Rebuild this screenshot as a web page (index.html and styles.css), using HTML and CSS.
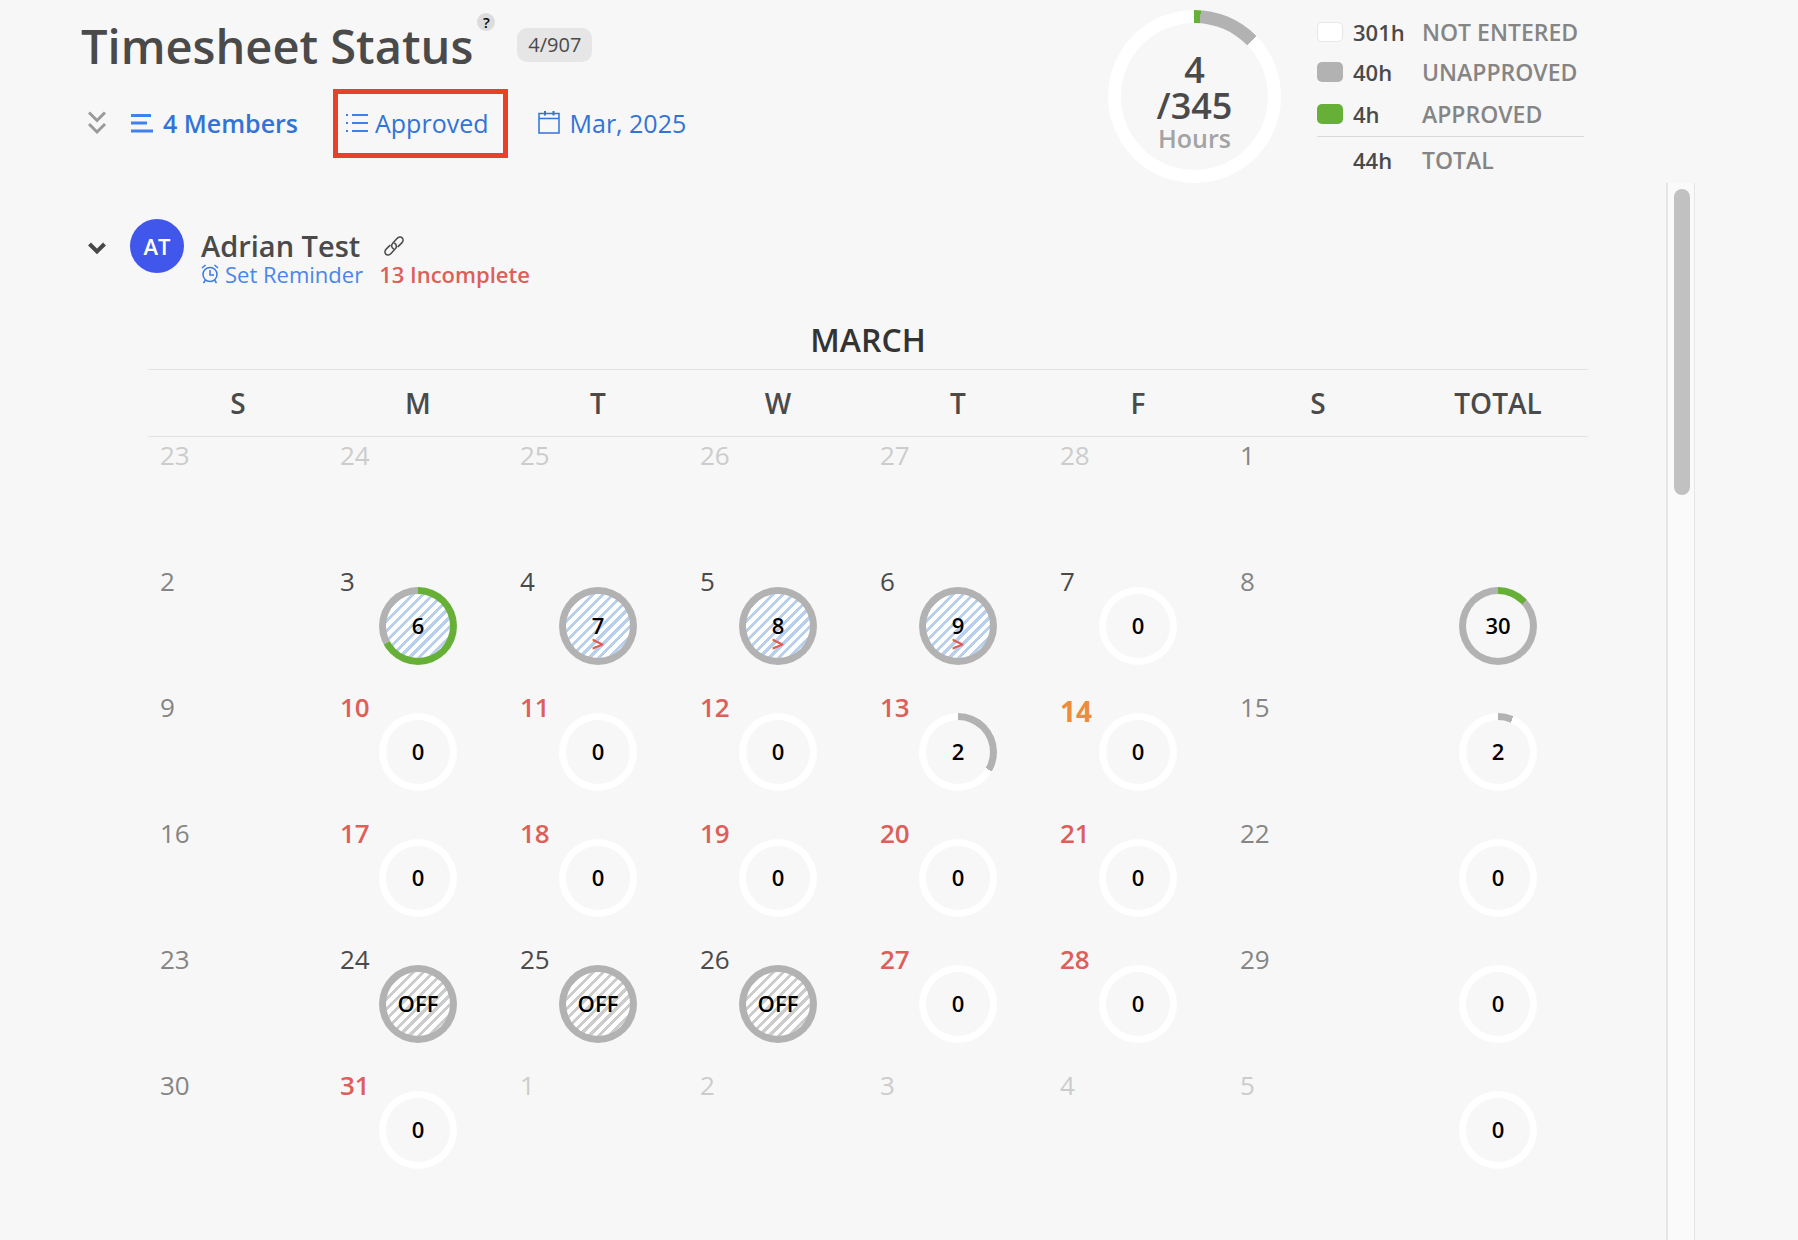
FILE: index.html
```html
<!DOCTYPE html>
<html lang="en">
<head>
<meta charset="utf-8">
<meta name="viewport" content="width=device-width, initial-scale=1">
<title>Timesheet Status</title>
<link rel="stylesheet" href="styles.css">
</head>
<body>
<header class="header">
  <div class="heading">
    <div class="title-row">
      <h1 class="title">Timesheet Status</h1>
      <button class="help" type="button" aria-label="Help">?</button>
      <span class="badge">4/907</span>
    </div>
    <div class="filters">
      <button class="expand" type="button" aria-label="Expand all">
        <svg width="18" height="24" viewBox="0 0 18 24" fill="none" stroke="#999" stroke-width="3"><path d="M1 1.5l8 8 8-8M1 13l8 8 8-8"/></svg>
      </button>
      <button class="filter members" type="button">
        <svg width="22" height="20" viewBox="0 0 22 20" fill="none" stroke="#4080f0" stroke-width="3"><path d="M0 2.500h20M0 10h16M0 18h22"/></svg>
        4 Members
      </button>
      <button class="filter highlighted" type="button">
        <svg width="22" height="20" viewBox="0 0 22 20" fill="none" stroke="#4080e8" stroke-width="2"><path d="M0 2h2M6 2h16M0 10h2M6 10h16M0 18h2M6 18h16"/></svg>
        Approved
      </button>
      <button class="filter period" type="button">
        <svg width="22" height="24" viewBox="0 0 22 24" fill="none" stroke="#3273d6" stroke-width="1.500"><path d="M1 2.500h20v19.500H1zM1 7.500h20"/><path d="M7 0v4.500M15.500 0v4.500" stroke-width="2"/></svg>
        Mar, 2025
      </button>
    </div>
  </div>
  <div class="summary">
    <div class="ring ring-large" style="--approved:1.16%;--entered:12.75%">
      <div class="face"><strong class="hours">4<br>/345</strong><span class="unit">Hours</span></div>
    </div>
    <table class="legend">
      <tbody>
        <tr><td><span class="swatch empty"></span></td><td class="amount">301h</td><th scope="row">NOT ENTERED</th></tr>
        <tr><td><span class="swatch entered"></span></td><td class="amount">40h</td><th scope="row">UNAPPROVED</th></tr>
        <tr><td><span class="swatch approved"></span></td><td class="amount">4h</td><th scope="row">APPROVED</th></tr>
      </tbody>
      <tfoot>
        <tr><td></td><td class="amount">44h</td><th scope="row">TOTAL</th></tr>
      </tfoot>
    </table>
  </div>
</header>
<div class="content">
  <main class="main">
    <section class="member">
      <button class="toggle" type="button" aria-label="Collapse member">
        <svg width="18" height="13" viewBox="0 0 18 13" fill="none" stroke="#484848" stroke-width="4"><path d="M1.500 2l7.500 7.500L16.500 2"/></svg>
      </button>
      <span class="avatar">AT</span>
      <div class="identity">
        <div class="name-row">
          <h2 class="name">Adrian Test</h2>
          <a class="link" href="#adrian" aria-label="Link to member">
            <svg width="20" height="20" viewBox="0 0 20 20" fill="none" stroke="#4a4a4a" stroke-width="1.500" stroke-linecap="round"><path d="M9.500 12.800C7.300 11.500 7 9 8.700 7.200L13 2.600c1.700-1.800 3.900-2 5.200-.7s1.200 3.500-.6 5.200L14 10.600"/><path d="M10.500 7.200c2.200 1.300 2.500 3.800.8 5.600L7 17.400c-1.700 1.800-3.900 2-5.200.7s-1.200-3.500.6-5.200L6 9.400"/></svg>
          </a>
        </div>
        <div class="status-row">
          <button class="reminder" type="button">
            <svg width="18" height="20" viewBox="0 0 18 20" fill="none" stroke="#3b7be0" stroke-width="1.500"><circle cx="9" cy="10.500" r="7"/><path d="M9 6v5h4M1 4l3.500-3M17 4l-3.500-3M4.500 16L2.500 19M13.500 16l2 3"/></svg>
            Set Reminder
          </button>
          <span class="incomplete">13 Incomplete</span>
        </div>
      </div>
    </section>
    <table class="calendar">
      <caption>MARCH</caption>
      <thead>
        <tr><th scope="col">S</th><th scope="col">M</th><th scope="col">T</th><th scope="col">W</th><th scope="col">T</th><th scope="col">F</th><th scope="col">S</th><th scope="col">TOTAL</th></tr>
      </thead>
      <tbody>
        <tr>
          <td><div class="day"><span class="date outside">23</span></div></td>
          <td><div class="day"><span class="date outside">24</span></div></td>
          <td><div class="day"><span class="date outside">25</span></div></td>
          <td><div class="day"><span class="date outside">26</span></div></td>
          <td><div class="day"><span class="date outside">27</span></div></td>
          <td><div class="day"><span class="date outside">28</span></div></td>
          <td><div class="day"><span class="date weekend">1</span></div></td>
          <td></td>
        </tr>
        <tr>
          <td><div class="day"><span class="date weekend">2</span></div></td>
          <td><div class="day"><span class="date">3</span><div class="ring" style="--approved:67%;--entered:100%"><div class="face logged">6</div></div></div></td>
          <td><div class="day"><span class="date">4</span><div class="ring" style="--entered:100%"><div class="face logged">7<span class="over">&gt;</span></div></div></div></td>
          <td><div class="day"><span class="date">5</span><div class="ring" style="--entered:100%"><div class="face logged">8<span class="over">&gt;</span></div></div></div></td>
          <td><div class="day"><span class="date">6</span><div class="ring" style="--entered:100%"><div class="face logged">9<span class="over">&gt;</span></div></div></div></td>
          <td><div class="day"><span class="date">7</span><div class="ring"><div class="face">0</div></div></div></td>
          <td><div class="day"><span class="date weekend">8</span></div></td>
          <td><div class="day"><div class="ring" style="--approved:13.300%;--entered:100%"><div class="face">30</div></div></div></td>
        </tr>
        <tr>
          <td><div class="day"><span class="date weekend">9</span></div></td>
          <td><div class="day"><span class="date missing">10</span><div class="ring"><div class="face">0</div></div></div></td>
          <td><div class="day"><span class="date missing">11</span><div class="ring"><div class="face">0</div></div></div></td>
          <td><div class="day"><span class="date missing">12</span><div class="ring"><div class="face">0</div></div></div></td>
          <td><div class="day"><span class="date missing">13</span><div class="ring" style="--entered:33.300%"><div class="face">2</div></div></div></td>
          <td><div class="day"><span class="date today">14</span><div class="ring"><div class="face">0</div></div></div></td>
          <td><div class="day"><span class="date weekend">15</span></div></td>
          <td><div class="day"><div class="ring" style="--entered:6.500%"><div class="face">2</div></div></div></td>
        </tr>
        <tr>
          <td><div class="day"><span class="date weekend">16</span></div></td>
          <td><div class="day"><span class="date missing">17</span><div class="ring"><div class="face">0</div></div></div></td>
          <td><div class="day"><span class="date missing">18</span><div class="ring"><div class="face">0</div></div></div></td>
          <td><div class="day"><span class="date missing">19</span><div class="ring"><div class="face">0</div></div></div></td>
          <td><div class="day"><span class="date missing">20</span><div class="ring"><div class="face">0</div></div></div></td>
          <td><div class="day"><span class="date missing">21</span><div class="ring"><div class="face">0</div></div></div></td>
          <td><div class="day"><span class="date weekend">22</span></div></td>
          <td><div class="day"><div class="ring"><div class="face">0</div></div></div></td>
        </tr>
        <tr>
          <td><div class="day"><span class="date weekend">23</span></div></td>
          <td><div class="day"><span class="date">24</span><div class="ring" style="--entered:100%"><div class="face off">OFF</div></div></div></td>
          <td><div class="day"><span class="date">25</span><div class="ring" style="--entered:100%"><div class="face off">OFF</div></div></div></td>
          <td><div class="day"><span class="date">26</span><div class="ring" style="--entered:100%"><div class="face off">OFF</div></div></div></td>
          <td><div class="day"><span class="date missing">27</span><div class="ring"><div class="face">0</div></div></div></td>
          <td><div class="day"><span class="date missing">28</span><div class="ring"><div class="face">0</div></div></div></td>
          <td><div class="day"><span class="date weekend">29</span></div></td>
          <td><div class="day"><div class="ring"><div class="face">0</div></div></div></td>
        </tr>
        <tr>
          <td><div class="day"><span class="date weekend">30</span></div></td>
          <td><div class="day"><span class="date missing">31</span><div class="ring"><div class="face">0</div></div></div></td>
          <td><div class="day"><span class="date outside">1</span></div></td>
          <td><div class="day"><span class="date outside">2</span></div></td>
          <td><div class="day"><span class="date outside">3</span></div></td>
          <td><div class="day"><span class="date outside">4</span></div></td>
          <td><div class="day"><span class="date outside">5</span></div></td>
          <td><div class="day"><div class="ring"><div class="face">0</div></div></div></td>
        </tr>
      </tbody>
    </table>
  </main>
  <div class="track"><div class="thumb"></div></div>
</div>
</body>
</html>
```
FILE: styles.css
```css
* { box-sizing: border-box; }

:root {
  --page: #f7f7f7;
  --text: #4a4a4a;
  --blue: #3273d6;
  --red: #dd5f5a;
  --gray: #b2b2b2;
  --green: #67b037;
}

body {
  margin: 0;
  min-height: 100vh;
  display: flex;
  flex-direction: column;
  background: var(--page);
  color: var(--text);
  font-family: "Open Sans", "Noto Sans", sans-serif;
  font-size: 26px;
}

h1, h2 { margin: 0; font-weight: 600; }

button {
  display: flex;
  align-items: center;
  margin: 0;
  padding: 0;
  border: 0;
  background: none;
  color: inherit;
  font: inherit;
  cursor: pointer;
}

svg { display: block; flex: none; }

/* Header */
.header {
  display: flex;
  justify-content: space-between;
  height: 183px;
  padding: 10px 214px 0 81px;
}

.title-row { display: flex; align-items: flex-start; height: 79px; }
.title { font-size: 47px; line-height: 72px; }

.help {
  justify-content: center;
  width: 18px;
  height: 18px;
  margin: 3px 0 0 4px;
  border-radius: 50%;
  background: #dcdcdc;
  color: #000;
  font-size: 15px;
  font-weight: 600;
  line-height: 18px;
}

.badge {
  margin: 18px 0 0 22px;
  padding: 0 11px;
  border-radius: 10px;
  background: #e6e6e6;
  font-size: 20px;
  line-height: 34px;
}

.filters { display: flex; align-items: center; color: var(--blue); font-size: 25px; }
.filter { height: 69px; padding-bottom: 2px; line-height: 34px; }
.expand { margin: 0 25px 0 7px; padding-bottom: 2px; }
.members { gap: 10px; margin-right: 35px; font-weight: 600; }
.highlighted { gap: 7px; padding: 0 14px 2px 8px; border: 5px solid #ea4025; }
.period { gap: 10px; margin-left: 30px; }

.summary { display: flex; align-items: flex-start; gap: 36px; }

/* Progress rings */
.ring {
  width: 78px;
  height: 78px;
  padding: 7px;
  border-radius: 50%;
  background: conic-gradient(
    var(--green) 0 var(--approved, 0%),
    var(--gray) 0 var(--entered, 0%),
    #fff 0
  );
}

.face {
  position: relative;
  display: grid;
  place-items: center;
  height: 100%;
  padding-bottom: 2px;
  border-radius: 50%;
  background: var(--page);
  color: #000;
  font-size: 22px;
  font-weight: 600;
  line-height: 30px;
}

.logged { background: repeating-linear-gradient(135deg, #fff 0 4px, #b9d0ec 4px 7px); }
.off { background: repeating-linear-gradient(135deg, #fff 0 4px, #ccc 4px 7px); }
.over { position: absolute; bottom: 5px; color: var(--red); font-weight: 700; line-height: 20px; }

.ring-large { width: 173px; height: 173px; padding: 13px; }
.ring-large .face { align-content: center; padding: 10px 0 0; color: var(--text); }
.hours { font-size: 36px; font-weight: 600; line-height: 36px; text-align: center; }
.unit { color: #a3a3a3; font-size: 25px; line-height: 28px; }

.legend { width: 267px; margin-top: 2px; border-collapse: collapse; line-height: 30px; }
.legend td, .legend th { height: 40px; padding: 0; text-align: left; }
.legend tbody tr:last-child > * { height: 44px; }
.legend td:first-child { width: 36px; }
.legend th { color: #858585; font-size: 23px; font-weight: 600; white-space: nowrap; }
.legend .amount { width: 69px; font-size: 22px; font-weight: 600; }
.legend tfoot tr { border-top: 1px solid #d9d9d9; }
.legend tfoot td, .legend tfoot th { height: 48px; }

.swatch { display: block; width: 26px; height: 20px; border-radius: 5px; }
.swatch.empty { border: 1px solid #e8e8e8; background: #fff; }
.swatch.entered { background: var(--gray); }
.swatch.approved { background: var(--green); }

/* Scrolling content */
.content { display: flex; flex: 1; padding-right: 103px; }
.main { flex: 1; padding: 36px 78px 0 88px; }

.member { display: flex; align-items: flex-start; height: 96px; }
.toggle { height: 58px; margin-right: 24px; }

.avatar {
  width: 54px;
  height: 54px;
  border-radius: 50%;
  background: #4157eb;
  color: #fff;
  font-size: 22px;
  font-weight: 600;
  line-height: 54px;
  text-align: center;
}

.identity { margin: 10px 0 0 17px; }
.name-row { display: flex; align-items: center; gap: 24px; }
.name { font-size: 29px; line-height: 34px; }
.status-row { display: flex; gap: 16px; font-size: 22px; line-height: 22px; }
.reminder { gap: 6px; color: #4a86e8; }
.incomplete { color: var(--red); font-weight: 600; }

/* Calendar */
.calendar {
  width: calc(100% - 60px);
  margin-left: 60px;
  border-collapse: collapse;
  table-layout: fixed;
}

.calendar caption {
  height: 54px;
  color: #333;
  font-size: 32px;
  font-weight: 600;
  line-height: 50px;
}

.calendar thead tr { border: solid #e2e2e2; border-width: 1px 0; }
.calendar thead th { height: 67px; padding: 0; font-size: 28px; font-weight: 600; }
.calendar td { padding: 0; }

.day { display: grid; justify-items: center; align-items: start; height: 126px; }
.day > * { grid-area: 1 / 1; }
.day .ring { margin-top: 24px; }

.date { justify-self: start; margin-left: 12px; line-height: 36px; }
.date.outside { color: #ccc; }
.date.weekend { color: #858585; }
.date.missing { color: var(--red); font-weight: 600; }
.date.today { color: #ef8c3b; font-size: 28px; font-weight: 700; line-height: 44px; }

/* Scrollbar */
.track {
  width: 29px;
  padding: 6px 4px 0 6px;
  border: solid #e6e6e6;
  border-width: 0 1px 0 2px;
  background: #fafafa;
}

.thumb { width: 16px; height: 306px; border-radius: 8px; background: #c1c1c1; }
```
